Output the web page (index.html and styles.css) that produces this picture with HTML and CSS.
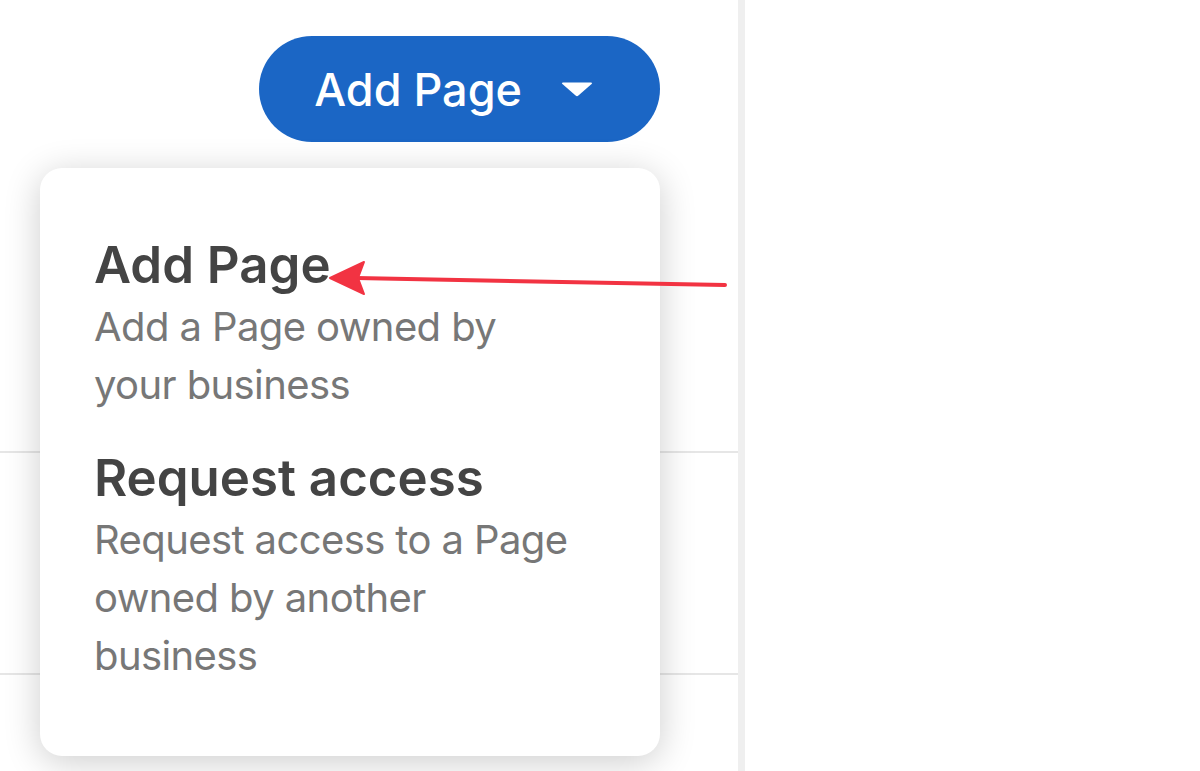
FILE: index.html
```html
<!DOCTYPE html>
<html lang="en">
<head>
    <meta charset="UTF-8">
    <meta name="viewport" content="width=device-width, initial-scale=1.0">
    <title>Pages</title>
    <link rel="stylesheet" href="styles.css">
</head>
<body>
    <div class="layout">
        <div class="panel">
            <div class="toolbar">
                <button class="add_btn">
                    <span>Add Page</span>
                    <svg class="caret" width="34" height="16" viewBox="0 0 34 16">
                        <path d="M3 1.5 H31 Q33 1.5 31.6 3 L18.4 14.6 Q17 15.8 15.6 14.6 L2.4 3 Q1 1.5 3 1.5 Z" fill="#fff"/>
                    </svg>
                </button>
            </div>
            <ul class="rows">
                <li></li>
                <li></li>
                <li></li>
            </ul>
            <!-- dropdown opened from the button -->
            <div class="menu">
                <div class="menu_item">
                    <h3>Add Page</h3>
                    <p>Add a Page owned by<br>your business</p>
                </div>
                <div class="menu_item">
                    <h3>Request access</h3>
                    <p>Request access to a Page<br>owned by another<br>business</p>
                </div>
            </div>
        </div>
        <div class="side"></div>
        <!-- annotation arrow -->
        <svg class="mark" width="1200" height="771" viewBox="0 0 1200 771">
            <line x1="356" y1="278" x2="725" y2="285" stroke="#f23342" stroke-width="4" stroke-linecap="round"/>
            <polygon points="330,278 364,262 358,278 364,294" fill="#f23342" stroke="#f23342" stroke-width="2" stroke-linejoin="round"/>
        </svg>
    </div>
</body>
</html>
```

FILE: styles.css
```css
*{
    margin: 0;
    padding: 0;
    box-sizing: border-box;
}
body{
    font-family: 'Inter', 'Roboto', sans-serif;
    background-color: #fff;
}
.layout{
    position: relative;
    display: flex;
    width: 1200px;
    height: 771px;
    overflow: hidden;
}
.panel{
    position: relative;
    width: 745px;
    border-right: 7px solid #efefef;
}
.side{
    flex: 1;
}
.toolbar{
    display: flex;
    justify-content: flex-end;
    padding: 36px 78px 91px 0;
}
.add_btn{
    display: flex;
    align-items: center;
    border: none;
    border-radius: 53px;
    padding: 0 66px 0 55px;
    height: 106px;
    font-family: 'Inter', 'Roboto', sans-serif;
    font-weight: 500;
    font-size: 45px;
    color: #fff;
    background-color: #1b66c5;
}
.caret{
    margin-left: 38px;
}
.rows{
    list-style: none;
}
.rows li{
    height: 222px;
}
.rows li:first-child{
    height: 220px;
    border-bottom: 2px solid #e6e6e6;
}
.rows li:nth-child(2){
    height: 222px;
    border-bottom: 2px solid #e6e6e6;
}
.menu{
    position: absolute;
    left: 40px;
    top: 168px;
    width: 620px;
    padding: 67px 40px 71px 54px;
    border-radius: 22px;
    background-color: #fff;
    box-shadow: 0 6px 36px rgba(0,0,0,0.2);
}
.menu_item + .menu_item{
    margin-top: 34px;
}
.menu_item h3{
    font-weight: 600;
    font-size: 51px;
    line-height: 60px;
    color: #444;
}
.menu_item p{
    margin-top: 3px;
    font-size: 40px;
    line-height: 58px;
    letter-spacing: -0.6px;
    color: #777;
}
.mark{
    position: absolute;
    left: 0;
    top: 0;
    pointer-events: none;
}
```
